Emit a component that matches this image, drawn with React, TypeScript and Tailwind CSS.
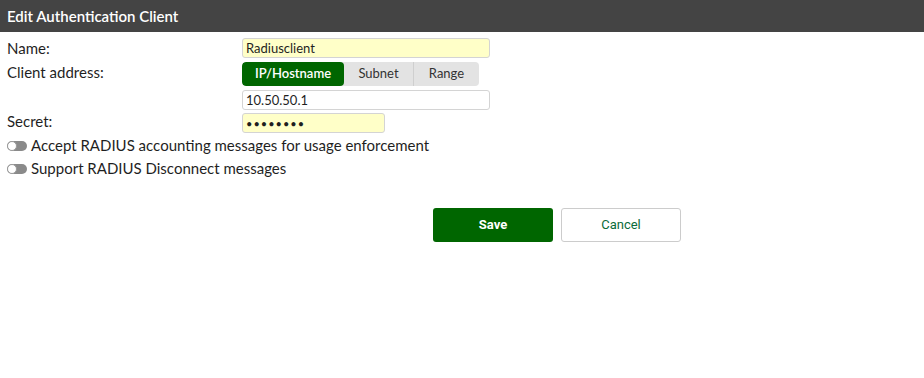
export default function App() {
  return (
    <div className="w-[924px] h-[378px] bg-white font-['Lato','Noto_Sans',sans-serif] text-[#1f1f1f]">
      <div className="h-8 bg-[#444444] flex items-center px-[7px]">
        <h1 className="text-white text-[15px] font-semibold">Edit Authentication Client</h1>
      </div>
      <div className="px-[7px] pt-[6px]">
        <div className="flex items-center h-5">
          <label className="w-[235px] text-[15px]">Name:</label>
          <input
            readOnly
            value="Radiusclient"
            className="w-[248px] h-5 px-[3px] text-[13px] bg-[#ffffc8] border border-[#d4d4d4] rounded-[3px] outline-none"
          />
        </div>
        <div className="flex mt-[4px]">
          <label className="w-[235px] text-[15px] leading-5">Client address:</label>
          <div className="flex flex-col">
            <div className="flex h-6 w-[237px] rounded-[4px] bg-[#e3e3e3] text-[13px] overflow-hidden">
              <button className="w-[102px] bg-[#006600] text-white font-semibold rounded-[4px]">IP/Hostname</button>
              <button className="w-[70px] text-[#333] border-r border-[#cfcfcf]">Subnet</button>
              <button className="flex-1 text-[#333]">Range</button>
            </div>
            <input
              readOnly
              value="10.50.50.1"
              className="mt-[4px] w-[248px] h-5 px-[3px] text-[13px] bg-white border border-[#d4d4d4] rounded-[3px] outline-none"
            />
          </div>
        </div>
        <div className="flex items-center h-5 mt-[3px]">
          <label className="w-[235px] text-[15px] -translate-y-[2px]">Secret:</label>
          <input
            readOnly
            type="password"
            value="password"
            className="w-[143px] h-5 px-[3px] text-[11px] tracking-[1px] bg-[#ffffc8] border border-[#d4d4d4] rounded-[3px] outline-none"
          />
        </div>
        <div className="flex items-center gap-[4px] mt-[1px] h-[23px]">
          <Toggle />
          <span className="text-[15px]">Accept RADIUS accounting messages for usage enforcement</span>
        </div>
        <div className="flex items-center gap-[4px] h-[23px]">
          <Toggle />
          <span className="text-[15px]">Support RADIUS Disconnect messages</span>
        </div>
        <div className="flex gap-2 mt-[28px] pl-[426px]">
          <button className="w-[120px] h-[34px] rounded-[3px] bg-[#006600] text-white text-[13px] font-bold font-['Roboto',sans-serif]">
            Save
          </button>
          <button className="w-[120px] h-[34px] rounded-[3px] bg-white border border-[#cccccc] text-[#0b6b3a] text-[13px] font-['Roboto',sans-serif]">
            Cancel
          </button>
        </div>
      </div>
    </div>
  );
}

function Toggle() {
  return (
    <span className="relative inline-block w-5 h-[10px] rounded-full bg-[#8a8a8a]">
      <span className="absolute left-0 top-0 w-[10px] h-[10px] rounded-full bg-white border border-[#9a9a9a]" />
    </span>
  );
}
